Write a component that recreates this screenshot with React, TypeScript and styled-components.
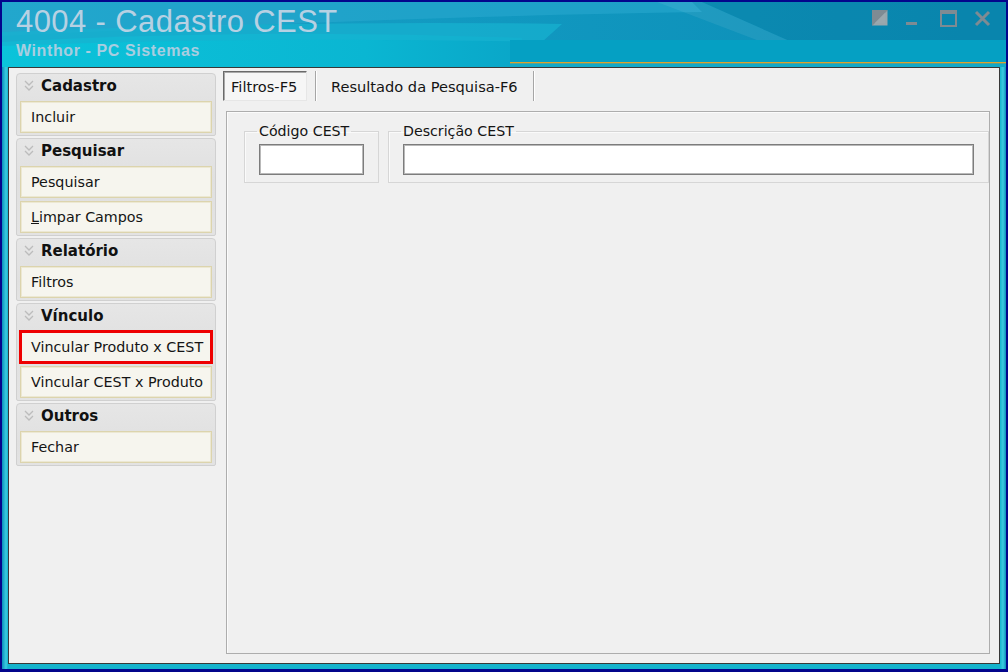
import React from "react";
import styled, { createGlobalStyle, css } from "styled-components";

const GlobalStyle = createGlobalStyle`
  html, body { margin: 0; padding: 0; background: #03058c; }
  body { font-family: "DejaVu Sans", Verdana, sans-serif; }
  * { box-sizing: border-box; }
`;

const Window = styled.div`
  width: 1008px;
  height: 672px;
  border: 2px solid #03058c;
  border-bottom-width: 3px;
  background: linear-gradient(
    90deg,
    #0a8fbb 0px,
    #3ccbe0 4px,
    #14b3cd 6px,
    #14b3cd calc(100% - 6px),
    #3ccbe0 calc(100% - 3px),
    #0a8fbb 100%
  );
  display: flex;
  flex-direction: column;
`;

const TitleBar = styled.header`
  position: relative;
  height: 65px;
  flex: none;
  display: flex;
  justify-content: space-between;
  align-items: flex-start;
  overflow: hidden;
`;

const TitleArt = styled.svg`
  position: absolute;
  inset: 0;
  width: 100%;
  height: 100%;
  z-index: 0;
`;

const TitleBlock = styled.div`
  position: relative;
  z-index: 1;
  padding: 2px 0 0 14px;
`;

const Title = styled.h1`
  margin: 0;
  font-family: "Liberation Sans", Arial, sans-serif;
  font-weight: normal;
  font-size: 31px;
  line-height: 36px;
  letter-spacing: 0.4px;
  color: #b7d1e3;
`;

const Subtitle = styled.div`
  margin-top: 2px;
  font-family: "Liberation Sans", Arial, sans-serif;
  font-weight: bold;
  font-size: 16px;
  line-height: 18px;
  letter-spacing: 0.6px;
  color: #a9cde0;
`;

const Controls = styled.div`
  position: relative;
  z-index: 1;
  display: flex;
  gap: 17px;
  padding: 8px 15px 0 0;
`;

const ControlIcon = styled.svg`
  width: 17px;
  height: 17px;
  display: block;
`;

const Frame = styled.div`
  flex: 1;
  display: flex;
  padding: 0 6px 5px 6px;
  min-height: 0;
`;

const Client = styled.main`
  flex: 1;
  display: flex;
  border: 1px solid #383838;
  background: #f0f0f0;
  padding: 3px 9px 9px 7px;
  min-height: 0;
`;

const Sidebar = styled.nav`
  width: 200px;
  flex: none;
  margin-top: 2px;
  display: flex;
  flex-direction: column;
  gap: 2px;
  align-self: flex-start;
`;

const Section = styled.section`
  border: 1px solid #d0d0d0;
  border-radius: 4px 4px 2px 2px;
  background: linear-gradient(180deg, #e6e6e6 0%, #e0e0e0 40px, #e3e3e3 100%);
  padding: 0 3px 2px 3px;
  display: flex;
  flex-direction: column;
  gap: 3px;
`;

const SectionHeader = styled.div`
  height: 27px;
  margin-bottom: -3px;
  display: flex;
  align-items: center;
  gap: 7px;
  padding: 0 0 3px 4px;
  font-weight: bold;
  font-size: 15px;
  color: #111111;
`;

const SectionButton = styled.button<{ $marked?: boolean }>`
  height: 32px;
  width: 100%;
  display: flex;
  align-items: center;
  padding: 0 0 0 10px;
  margin: 0;
  border: 1px solid #dcd4ad;
  box-shadow: inset 0 0 0 1px #ece8d3;
  background: #f6f5ee;
  font-family: "DejaVu Sans", Verdana, sans-serif;
  font-size: 14.3px;
  color: #141414;
  text-align: left;
  cursor: default;
  white-space: nowrap;
  ${(p) =>
    p.$marked &&
    css`
      outline: 3px solid #ee0000;
      outline-offset: -2px;
      position: relative;
      z-index: 1;
    `}
`;

const RightPane = styled.div`
  flex: 1;
  margin-left: 6px;
  display: flex;
  flex-direction: column;
  min-width: 0;
`;

const TabStrip = styled.div`
  height: 31px;
  flex: none;
  display: flex;
  align-items: flex-start;
  padding-left: 1px;
`;

const Tab = styled.div<{ $active?: boolean }>`
  height: 30px;
  display: flex;
  align-items: center;
  font-size: 14.6px;
  color: #141414;
  white-space: nowrap;
  ${(p) =>
    p.$active
      ? css`
          width: 84px;
          padding-left: 7px;
          border: 1px solid;
          border-color: #6a6a6a #e6e6e6 #e6e6e6 #6a6a6a;
          box-shadow: inset 1px 1px 0 #a9a9a9;
          background: #f6f6f6;
          margin-right: 8px;
        `
      : css`
          padding: 0 15px 0 14px;
        `}
`;

const TabDivider = styled.span`
  width: 2px;
  height: 30px;
  border-left: 1px solid #a6a6a6;
  border-right: 1px solid #ffffff;
  flex: none;
`;

const TabPanel = styled.div`
  flex: 1;
  margin: 9px 0 0 4px;
  border: 1px solid #adadad;
  box-shadow: inset 1px 1px 0 #fbfbfb;
  padding: 11px 0 0 17px;
`;

const FieldRow = styled.div`
  display: flex;
  gap: 9px;
`;

const Group = styled.fieldset<{ $grow?: boolean }>`
  margin: 0;
  min-width: 0;
  padding: 0 14px 7px 14px;
  border: 1px solid #d6d6d6;
  box-shadow: inset 1px 1px 0 #fafafa;
  ${(p) => p.$grow && css`flex: 1;`}
`;

const GroupLabel = styled.legend`
  padding: 0 2px;
  margin-left: -2px;
  font-size: 14.2px;
  line-height: 17px;
  color: #141414;
`;

const TextField = styled.input<{ $w?: number }>`
  display: block;
  margin-top: 4px;
  height: 31px;
  width: ${(p) => (p.$w ? `${p.$w}px` : "100%")};
  border: 1px solid #7c7c7c;
  box-shadow: inset 0 0 0 1px #b9b9b9;
  background: #ffffff;
  padding: 0 4px;
  font-family: "DejaVu Sans", Verdana, sans-serif;
  font-size: 14px;
  outline: none;
`;

function Chevrons() {
  return (
    <svg width="10" height="12" viewBox="0 0 10 12" aria-hidden>
      <polyline points="1,1 5,5 9,1" fill="none" stroke="#bcbcbc" strokeWidth="1.3" />
      <polyline points="1,6 5,10 9,6" fill="none" stroke="#bcbcbc" strokeWidth="1.3" />
    </svg>
  );
}

const menu: { title: string; items: React.ReactNode[]; marked?: number }[] = [
  { title: "Cadastro", items: ["Incluir"] },
  { title: "Pesquisar", items: ["Pesquisar", <><u>L</u>impar Campos</>] },
  { title: "Relatório", items: ["Filtros"] },
  { title: "Vínculo", items: ["Vincular Produto x CEST", "Vincular CEST x Produto"], marked: 0 },
  { title: "Outros", items: ["Fechar"] },
];

const ctl = "#7e8b93";

export default function App() {
  return (
    <>
      <GlobalStyle />
      <Window>
        <TitleBar>
          <TitleArt viewBox="0 0 1004 65" preserveAspectRatio="none" aria-hidden>
            <defs>
              <linearGradient id="skinBase" x1="0" y1="0" x2="1" y2="0">
                <stop offset="0" stopColor="#1aa4c9" />
                <stop offset="0.5" stopColor="#1198c0" />
                <stop offset="1" stopColor="#0b8cb5" />
              </linearGradient>
              <linearGradient id="skinGlow" x1="0" y1="0" x2="1" y2="0">
                <stop offset="0" stopColor="#0bc3da" />
                <stop offset="0.7" stopColor="#0ab6d2" />
                <stop offset="1" stopColor="#0aa6c8" />
              </linearGradient>
            </defs>
            <rect x="0" y="0" width="1004" height="65" fill="url(#skinBase)" />
            <path d="M0 0 H690 L700 10 Q 420 14 0 34 Z" fill="#2aaad0" opacity="0.55" />
            <path d="M0 40 Q 260 26 520 36 L 520 65 L 0 65 Z" fill="url(#skinGlow)" />
            <path d="M0 30 Q 300 18 560 22 L 540 40 Q 260 34 0 44 Z" fill="#17b2d0" opacity="0.7" />
            <path d="M655 0 H700 L790 40 H760 Z" fill="#ffffff" opacity="0.07" />
            <path d="M700 0 H1004 V40 H790 Z" fill="#06789f" opacity="0.35" />
            <rect x="508" y="38" width="496" height="22" fill="#05a0c3" />
            <rect x="508" y="60" width="496" height="1.6" fill="#e0a32c" />
            <rect x="508" y="61.6" width="496" height="3.4" fill="#12a9c8" />
          </TitleArt>
          <TitleBlock>
            <Title>4004 - Cadastro CEST</Title>
            <Subtitle>Winthor - PC Sistemas</Subtitle>
          </TitleBlock>
          <Controls>
            <ControlIcon viewBox="0 0 17 17" aria-hidden>
              <rect x="0.5" y="0.5" width="15" height="15" fill="#98a6ac" />
              <polygon points="0,0 16,0 0,16" fill={ctl} />
              <polygon points="3,13 13,3 13,13" fill="#9aa8ae" />
            </ControlIcon>
            <ControlIcon viewBox="0 0 17 17" aria-hidden>
              <rect x="0" y="12" width="11" height="3" fill={ctl} />
            </ControlIcon>
            <ControlIcon viewBox="0 0 17 17" aria-hidden>
              <rect x="1" y="1" width="15" height="15" fill="none" stroke={ctl} strokeWidth="2" />
              <rect x="0" y="0" width="17" height="4" fill={ctl} />
            </ControlIcon>
            <ControlIcon viewBox="0 0 17 17" aria-hidden>
              <path d="M2 2 L15 15 M15 2 L2 15" stroke={ctl} strokeWidth="3" />
            </ControlIcon>
          </Controls>
        </TitleBar>
        <Frame>
          <Client>
            <Sidebar>
              {menu.map((s) => (
                <Section key={s.title}>
                  <SectionHeader>
                    <Chevrons />
                    {s.title}
                  </SectionHeader>
                  {s.items.map((it, i) => (
                    <SectionButton key={i} $marked={s.marked === i}>
                      {it}
                    </SectionButton>
                  ))}
                </Section>
              ))}
            </Sidebar>
            <RightPane>
              <TabStrip>
                <Tab $active>Filtros-F5</Tab>
                <TabDivider />
                <Tab>Resultado da Pesquisa-F6</Tab>
                <TabDivider />
              </TabStrip>
              <TabPanel>
                <FieldRow>
                  <Group>
                    <GroupLabel>Código CEST</GroupLabel>
                    <TextField $w={105} />
                  </Group>
                  <Group $grow>
                    <GroupLabel>Descrição CEST</GroupLabel>
                    <TextField />
                  </Group>
                </FieldRow>
              </TabPanel>
            </RightPane>
          </Client>
        </Frame>
      </Window>
    </>
  );
}
